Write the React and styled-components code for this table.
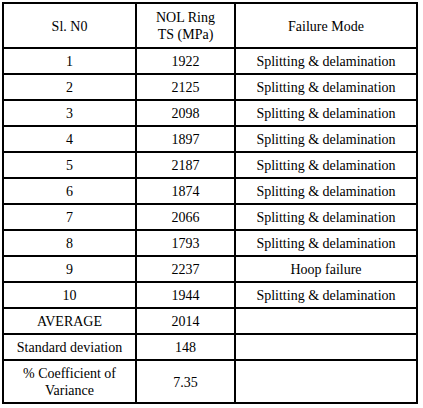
import React from 'react'
import styled, { createGlobalStyle } from 'styled-components'

const GlobalStyle = createGlobalStyle`
    body {
        margin: 0;
        background: #ffffff;
    }
`;

const rows = [
    { no: '1', ts: '1922', mode: 'Splitting & delamination' },
    { no: '2', ts: '2125', mode: 'Splitting & delamination' },
    { no: '3', ts: '2098', mode: 'Splitting & delamination' },
    { no: '4', ts: '1897', mode: 'Splitting & delamination' },
    { no: '5', ts: '2187', mode: 'Splitting & delamination' },
    { no: '6', ts: '1874', mode: 'Splitting & delamination' },
    { no: '7', ts: '2066', mode: 'Splitting & delamination' },
    { no: '8', ts: '1793', mode: 'Splitting & delamination' },
    { no: '9', ts: '2237', mode: 'Hoop failure' },
    { no: '10', ts: '1944', mode: 'Splitting & delamination' },
]

const stats = [
    { label: 'AVERAGE', value: '2014' },
    { label: 'Standard deviation', value: '148' },
    { label: <>% Coefficient of<br />Variance</>, value: '7.35', tall: true },
]

function App() {
    return (
        <Page>
            <GlobalStyle />
            <Table>
                <colgroup>
                    <col style={{ width: 133 }} />
                    <col style={{ width: 99 }} />
                    <col />
                </colgroup>
                <tbody>
                    <Row $h={45}>
                        <Cell>Sl. N0</Cell>
                        <Cell>NOL Ring<br />TS (MPa)</Cell>
                        <Cell>Failure Mode</Cell>
                    </Row>
                    {rows.map((r) => (
                        <Row key={r.no} $h={26}>
                            <Cell>{r.no}</Cell>
                            <Cell>{r.ts}</Cell>
                            <Cell>{r.mode}</Cell>
                        </Row>
                    ))}
                    {stats.map((s, i) => (
                        <Row key={i} $h={s.tall ? 43 : 26}>
                            <Cell>{s.label}</Cell>
                            <Cell>{s.value}</Cell>
                            <Cell />
                        </Row>
                    ))}
                </tbody>
            </Table>
        </Page>
    )
}

const Page = styled.div`
    padding: 2px;
`;

const Table = styled.table`
    width: 416px;
    border-collapse: collapse;
    table-layout: fixed;
    font-family: "Liberation Serif", "Times New Roman", serif;
    font-size: 14px;
    color: #000;
`;

const Row = styled.tr`
    height: ${(p) => p.$h}px;
`;

const Cell = styled.td`
    border: 2px solid #000;
    text-align: center;
    vertical-align: middle;
    padding: 1px 4px 0;
    line-height: 17px;
`;

export default App
